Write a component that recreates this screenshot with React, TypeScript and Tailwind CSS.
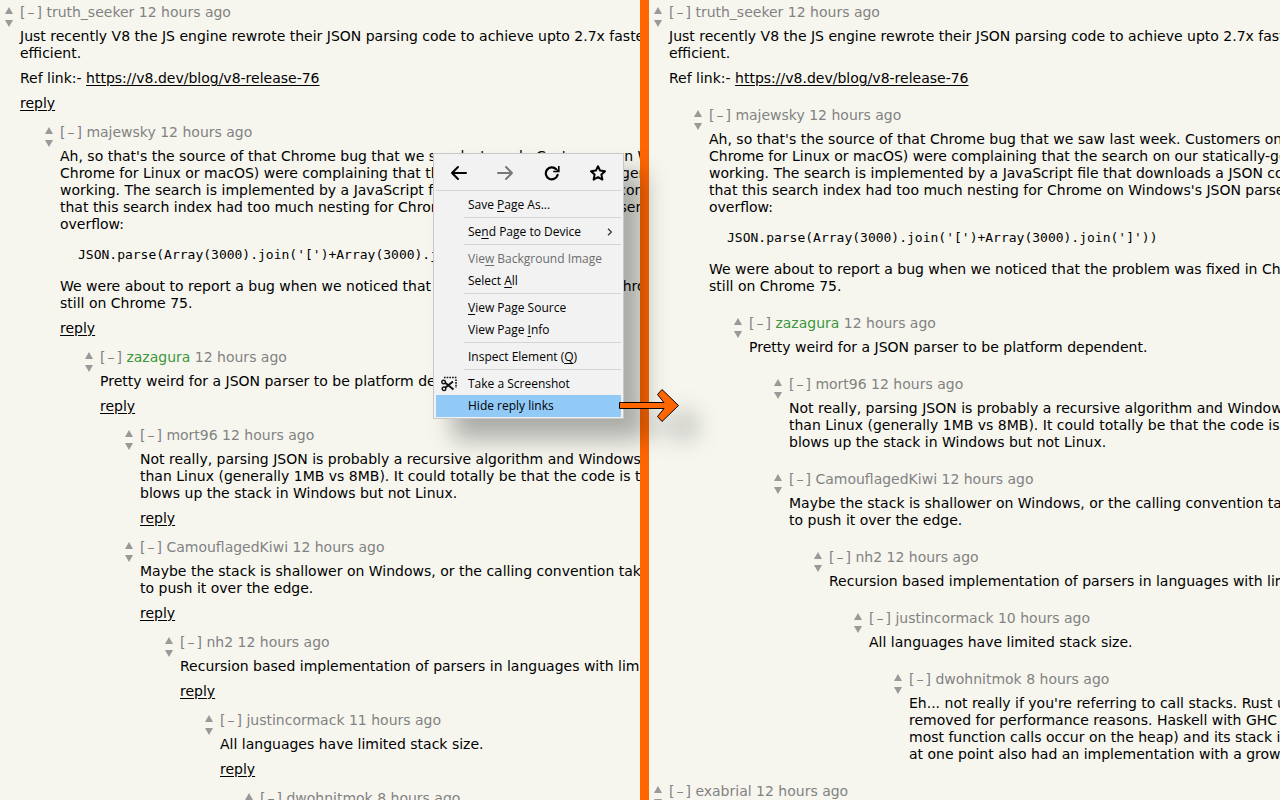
import type { ReactNode } from "react";

type Item = {
  author: string;
  age: [string, string];
  isNew?: boolean;
  depth: number;
  body: ReactNode;
};

const comments: Item[] = [
  {
    author: "truth_seeker",
    age: ["12 hours ago", "12 hours ago"],
    depth: 0,
    body: (
      <>
        <p>
          Just recently V8 the JS engine rewrote their JSON parsing code to achieve upto 2.7x faster and memory
          <br />
          efficient.
        </p>
        <p className="mt-2">
          Ref link:- <a href="https://v8.dev/blog/v8-release-76" className="underline underline-offset-2">https://v8.dev/blog/v8-release-76</a>
        </p>
      </>
    ),
  },
  {
    author: "majewsky",
    age: ["12 hours ago", "12 hours ago"],
    depth: 1,
    body: (
      <>
        <p>
          Ah, so that's the source of that Chrome bug that we saw last week. Customers on Windows (but not
          <br />
          Chrome for Linux or macOS) were complaining that the search on our statically-generated site was not
          <br />
          working. The search is implemented by a JavaScript file that downloads a JSON containing the index. It appears
          <br />
          that this search index had too much nesting for Chrome on Windows's JSON parser, causing a stack
          <br />
          overflow:
        </p>
        <pre className="mt-[13px] mb-[15px] pl-[18px] font-['DejaVu_Sans_Mono',monospace] text-[13px] leading-[17px]">
          {"JSON.parse(Array(3000).join('[')+Array(3000).join(']'))"}
        </pre>
        <p>
          We were about to report a bug when we noticed that the problem was fixed in Chrome 76, but we were
          <br />
          still on Chrome 75.
        </p>
      </>
    ),
  },
  {
    author: "zazagura",
    age: ["12 hours ago", "12 hours ago"],
    isNew: true,
    depth: 2,
    body: <p>Pretty weird for a JSON parser to be platform dependent.</p>,
  },
  {
    author: "mort96",
    age: ["12 hours ago", "12 hours ago"],
    depth: 3,
    body: (
      <p>
        Not really, parsing JSON is probably a recursive algorithm and Windows has a smaller stack
        <br />
        than Linux (generally 1MB vs 8MB). It could totally be that the code is the same, but
        <br />
        blows up the stack in Windows but not Linux.
      </p>
    ),
  },
  {
    author: "CamouflagedKiwi",
    age: ["12 hours ago", "12 hours ago"],
    depth: 3,
    body: (
      <p>
        Maybe the stack is shallower on Windows, or the calling convention takes just enough more
        <br />
        to push it over the edge.
      </p>
    ),
  },
  {
    author: "nh2",
    age: ["12 hours ago", "12 hours ago"],
    depth: 4,
    body: <p>Recursion based implementation of parsers in languages with limited stack size is a bug.</p>,
  },
  {
    author: "justincormack",
    age: ["11 hours ago", "10 hours ago"],
    depth: 5,
    body: <p>All languages have limited stack size.</p>,
  },
  {
    author: "dwohnitmok",
    age: ["8 hours ago", "8 hours ago"],
    depth: 6,
    body: (
      <p>
        Eh... not really if you're referring to call stacks. Rust used to have growable stacks,
        <br />
        removed for performance reasons. Haskell with GHC has no call stack (because
        <br />
        most function calls occur on the heap) and its stack is growable. Go
        <br />
        at one point also had an implementation with a growable stack.
      </p>
    ),
  },
  {
    author: "exabrial",
    age: ["12 hours ago", "12 hours ago"],
    depth: 0,
    body: <p>Nice work by the team.</p>,
  },
];

const indents = ["pl-0", "pl-10", "pl-20", "pl-30", "pl-40", "pl-50", "pl-60"];

function Votes() {
  return (
    <div className="flex w-4 shrink-0 flex-col items-center gap-[5px] pt-[3px]">
      <button type="button" aria-label="upvote" className="block">
        <svg width="8" height="8" viewBox="0 0 8 8" className="block">
          <path d="M4 0 L8 7 H0 Z" fill="#999999" />
        </svg>
      </button>
      <button type="button" aria-label="downvote" className="block">
        <svg width="8" height="8" viewBox="0 0 8 8" className="block">
          <path d="M0 0 H8 L4 7 Z" fill="#999999" />
        </svg>
      </button>
    </div>
  );
}

function Thread({ replies }: { replies: boolean }) {
  return (
    <section className={`flex min-w-0 flex-col gap-3 overflow-hidden pt-1 pl-px whitespace-nowrap ${replies ? "w-1/2 shrink-0" : "flex-1"}`}>
      {comments.map((c) => (
        <article key={c.author} className={`flex gap-[3px] ${indents[c.depth]}`}>
          <Votes />
          <div>
            <header className="mb-[7px] text-[#828282]">
              <button type="button">[<span className="px-0.5">–</span>]</button>{" "}
              <a href="#user" className={c.isNew ? "text-[#3c963c]" : ""}>{c.author}</a>{" "}
              <a href="#item">{replies ? c.age[0] : c.age[1]}</a>
            </header>
            {c.body}
            {replies ? (
              <p className="mt-2">
                <a href="#reply" className="underline underline-offset-2">reply</a>
              </p>
            ) : (
              <div className="h-2" />
            )}
          </div>
        </article>
      ))}
    </section>
  );
}

function MenuItem({ children, icon, arrow, disabled, active }: { children: ReactNode; icon?: ReactNode; arrow?: boolean; disabled?: boolean; active?: boolean }) {
  return (
    <button
      type="button"
      disabled={disabled}
      className={`flex h-[22px] w-full items-center text-left ${active ? "bg-[#91c9f7]" : ""} ${disabled ? "text-[#6d6d6d]" : "text-black"}`}
    >
      <span className="flex w-8 shrink-0 pl-[5px]">{icon}</span>
      <span className="flex-1">{children}</span>
      {arrow && (
        <svg width="6" height="8" viewBox="0 0 6 8" className="mr-2" fill="none" stroke="#333333" strokeWidth="1.2">
          <path d="M1 0.8 L4.4 4 L1 7.2" />
        </svg>
      )}
    </button>
  );
}

const U = ({ children }: { children: string }) => <span className="underline underline-offset-2">{children}</span>;
const Separator = () => <div className="mt-px mb-[3px] ml-7 h-px bg-[#d4d4d4]" />;

function ContextMenu() {
  return (
    <div className="w-[191px] border border-[#c8c8c8] bg-[#f2f2f2] px-[2px] pt-[2px] pb-px font-['Open_Sans','Noto_Sans',sans-serif] text-[12px] leading-4">
      <div className="flex h-[34px] items-center justify-around pb-px">
        <button type="button" aria-label="Back">
          <svg width="18" height="16" viewBox="0 0 18 16" className="block" fill="none" stroke="#000" strokeWidth="2" strokeLinecap="round" strokeLinejoin="round">
            <path d="M16 8 H2 M8 2 L2 8 L8 14" />
          </svg>
        </button>
        <button type="button" aria-label="Forward" disabled>
          <svg width="18" height="16" viewBox="0 0 18 16" className="block" fill="none" stroke="#777" strokeWidth="2" strokeLinecap="round" strokeLinejoin="round">
            <path d="M2 8 H16 M10 2 L16 8 L10 14" />
          </svg>
        </button>
        <button type="button" aria-label="Reload">
          <svg width="18" height="16" viewBox="0 0 18 16" className="block">
            <path d="M13.2 4.2 A6 6 0 1 0 14.6 10" fill="none" stroke="#000" strokeWidth="2.2" strokeLinecap="round" />
            <path d="M16.6 1 V7.3 H10.2 V5.8 H13.6 L15 4 V1 Z" fill="#000" />
          </svg>
        </button>
        <button type="button" aria-label="Bookmark this page">
          <svg width="18" height="16" viewBox="0 0 18 16" className="block" fill="none" stroke="#000" strokeWidth="2" strokeLinejoin="round">
            <path d="M9 1.2 L11.1 5.6 L16 6.2 L12.4 9.6 L13.4 14.6 L9 12.2 L4.6 14.6 L5.6 9.6 L2 6.2 L6.9 5.6 Z" />
          </svg>
        </button>
      </div>
      <div className="mb-[3px] h-px bg-[#d4d4d4]" />
      <MenuItem>Save <U>P</U>age As...</MenuItem>
      <Separator />
      <MenuItem arrow>Se<U>n</U>d Page to Device</MenuItem>
      <Separator />
      <MenuItem disabled>Vie<U>w</U> Background Image</MenuItem>
      <MenuItem>Select <U>A</U>ll</MenuItem>
      <Separator />
      <MenuItem><U>V</U>iew Page Source</MenuItem>
      <MenuItem>View Page <U>I</U>nfo</MenuItem>
      <Separator />
      <MenuItem>Inspect Element (<U>Q</U>)</MenuItem>
      <Separator />
      <MenuItem
        icon={
          <svg width="16" height="16" viewBox="0 0 16 16" fill="none" stroke="#111">
            <path d="M3 1.5 H15.5" strokeWidth="1.6" strokeDasharray="1.6 1.1" />
            <path d="M15 3.4 V12" strokeWidth="1.6" strokeDasharray="1.6 1.1" />
            <path d="M4.5 11.5 L12 5.5 M4.5 7 L12.5 13.5" strokeWidth="2" />
            <circle cx="2.6" cy="6" r="1.8" strokeWidth="1.4" />
            <circle cx="3" cy="12.8" r="1.8" strokeWidth="1.4" />
          </svg>
        }
      >
        Take a Screenshot
      </MenuItem>
      <MenuItem active>Hide reply links</MenuItem>
    </div>
  );
}

export default function App() {
  return (
    <main className="relative flex h-screen overflow-hidden bg-[#f6f6ef] font-['DejaVu_Sans',sans-serif] text-[14px] leading-[17px] text-black">
      <Thread replies />
      <div className="w-[9px] shrink-0 bg-[#ff6600]" />
      <Thread replies={false} />
      <div className="absolute top-[153px] left-[433px] drop-shadow-[20px_20px_12px_rgba(0,0,0,0.3)]">
        <ContextMenu />
        <svg width="62" height="37" viewBox="0 0 62 37" className="absolute right-[-56px] bottom-[-5px]">
          <path d="M1.5 15.5 H46 L39.5 7.5 L44 2.5 L60.5 18.5 L44 34.5 L39.5 29.5 L46 21.5 H1.5 Z" fill="#ff6600" stroke="#000" />
        </svg>
      </div>
    </main>
  );
}
